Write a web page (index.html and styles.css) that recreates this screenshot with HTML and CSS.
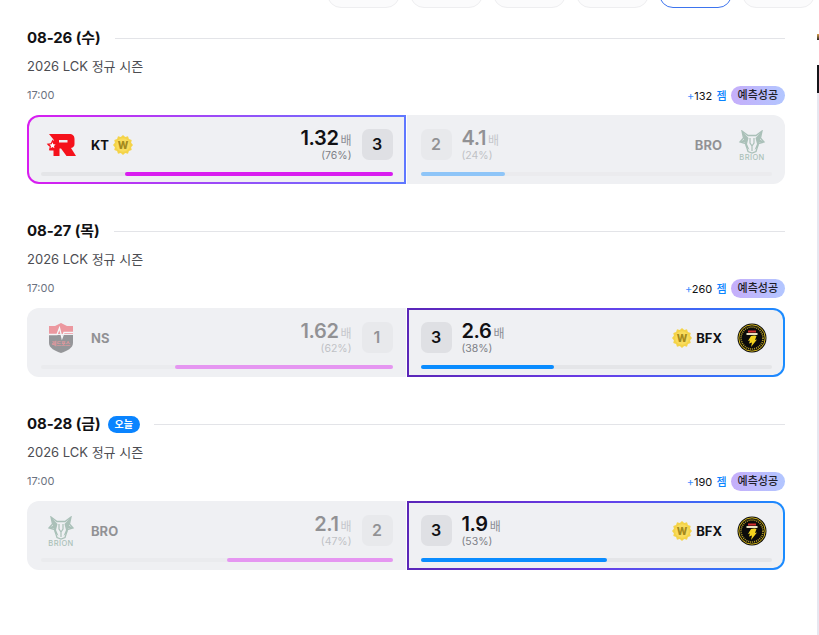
FILE: index.html
```html
<!DOCTYPE html>
<html lang="ko">
<head>
<meta charset="utf-8">
<title>LCK 승부예측</title>
<link rel="stylesheet" href="styles.css">
</head>
<body>
<svg class="defs" width="0" height="0" aria-hidden="true">
  <symbol id="logo-kt" viewBox="0 0 30 22">
    <path fill="#f5121c" d="M3 0H23C27 0 28.500 2 28.500 5V10C28.500 12 27.500 13.500 25 14L30 22H20.500L15 14.500H13.500V22H7.500V16.500H3.500L4.500 13 1 10.500H5.500L6.500 7H7.500V5.500Z"/>
    <rect x="13" y="6" width="8.500" height="2.500" fill="#eff0f3"/>
    <polygon fill="#f5121c" points="6.500,5.500 8.200,9.300 12.300,9.700 9.200,12.400 10.100,16.500 6.500,14.300 2.900,16.500 3.800,12.400 .7,9.700 4.800,9.300"/>
    <polygon fill="#fff" points="6.500,8.200 7.400,10.300 9.600,10.500 8,12 8.400,14.200 6.500,13 4.600,14.200 5,12 3.400,10.500 5.600,10.300"/>
  </symbol>
  <symbol id="logo-bro" viewBox="0 0 30 30">
    <path fill="none" stroke="#4c8069" stroke-width="1.300" d="M5 1 11 5.500H19L25 1 23.500 8 27 12 21.500 13.500 19 21.500 15 23 11 21.500 8.500 13.500 3 12 6.500 8Z"/>
    <path fill="#4c8069" d="M5 1 11.500 8 10 14 12.500 20 9 17 8 12.500 3 12 7 9.500ZM25 1 18.500 8 20 14 17.500 20 21 17 22 12.500 27 12 23 9.500Z"/>
    <path fill="none" stroke="#4c8069" stroke-width="1.200" d="M13 8V13L15 16V21M17 8V13L15 16"/>
    <text class="bro-word" x="15" y="29.500" text-anchor="middle">BRION</text>
  </symbol>
  <symbol id="logo-ns" viewBox="0 0 24 30">
    <path fill="#e8202c" d="M12 0 18 3H24V11H0V3H6Z"/>
    <path fill="#1c1c1e" d="M0 12H24V20C24 25 18 28 12 30 6 28 0 25 0 20Z"/>
    <path fill="none" stroke="#fff" stroke-width="1.300" d="M0 11.500H8L10.500 5 13 15 15 9.500H24"/>
    <text class="ns-word" x="12" y="21.500" text-anchor="middle">레드포스</text>
  </symbol>
  <symbol id="logo-bfx" viewBox="0 0 30 30">
    <circle cx="15" cy="15" r="14.500" fill="#0b0b0b"/>
    <circle cx="15" cy="15" r="13.200" fill="none" stroke="#e2c21c" stroke-width=".9"/>
    <circle cx="15" cy="15" r="11" fill="none" stroke="#b9a22a" stroke-width="1.600" stroke-dasharray="1 1"/>
    <circle cx="15" cy="15" r="9" fill="#0b0b0b"/>
    <rect x="11" y="7.500" width="8" height="2" fill="#d32f2f"/>
    <rect x="9.500" y="10" width="11" height="2" fill="#e8e2c0"/>
    <path fill="#f2d21e" d="M17.500 12.500 19.500 13 18 17 20 16.500 14 24 15 19.500 12 20.500 13 17.500 11 18 14 13Z"/>
  </symbol>
  <symbol id="badge-w" viewBox="0 0 20 20">
    <polygon fill="#f4d348" points="20,10 18.100,12.200 18.700,15 15.900,15.900 15,18.700 12.200,18.100 10,20 7.800,18.100 5,18.700 4.100,15.900 1.300,15 1.900,12.200 0,10 1.900,7.800 1.300,5 4.100,4.100 5,1.300 7.800,1.900 10,0 12.200,1.900 15,1.300 15.900,4.100 18.700,5 18.100,7.800"/>
    <circle cx="10" cy="10" r="6.800" fill="#f9dc5c"/>
    <text class="w-word" x="10" y="13.600" text-anchor="middle">W</text>
  </symbol>
</svg>

<div class="page">
  <main class="main">
    <nav class="pills">
      <span class="pill"></span><span class="pill"></span><span class="pill"></span><span class="pill"></span>
      <span class="pill pill-active"></span><span class="pill"></span>
    </nav>

    <section class="day">
      <header class="day-head"><h2 class="day-date">08-26 (수)</h2><span class="day-rule"></span></header>
      <p class="league">2026 LCK 정규 시즌</p>
      <div class="meta">
        <span class="time">17:00</span>
        <span class="reward"><i class="plus">+</i>132 <b class="gem">젬</b></span>
        <span class="result">예측성공</span>
      </div>
      <div class="match">
        <div class="side side-left win win-pink">
          <div class="row">
            <svg class="logo"><use href="#logo-kt" x="5" y="4" width="30" height="22"/></svg>
            <span class="team">KT</span>
            <svg class="badge"><use href="#badge-w"/></svg>
            <div class="odds odds-end"><div class="odds-main"><span class="rate">1.32</span><span class="unit">배</span></div><span class="pct">(76%)</span></div>
            <span class="score">3</span>
          </div>
          <div class="track track-end"><span class="fill fill-pink" style="width:76%"></span></div>
        </div>
        <div class="side side-right lose">
          <div class="row">
            <span class="score">2</span>
            <div class="odds"><div class="odds-main"><span class="rate">4.1</span><span class="unit">배</span></div><span class="pct">(24%)</span></div>
            <span class="team team-end">BRO</span>
            <svg class="logo"><use href="#logo-bro" x="5" y="0" width="30" height="30"/></svg>
          </div>
          <div class="track"><span class="fill fill-blue" style="width:24%"></span></div>
        </div>
      </div>
    </section>

    <section class="day">
      <header class="day-head"><h2 class="day-date">08-27 (목)</h2><span class="day-rule"></span></header>
      <p class="league">2026 LCK 정규 시즌</p>
      <div class="meta">
        <span class="time">17:00</span>
        <span class="reward"><i class="plus">+</i>260 <b class="gem">젬</b></span>
        <span class="result">예측성공</span>
      </div>
      <div class="match">
        <div class="side side-left lose">
          <div class="row">
            <svg class="logo"><use href="#logo-ns" x="8" y="0" width="24" height="30"/></svg>
            <span class="team">NS</span>
            <div class="odds odds-end"><div class="odds-main"><span class="rate">1.62</span><span class="unit">배</span></div><span class="pct">(62%)</span></div>
            <span class="score">1</span>
          </div>
          <div class="track track-end"><span class="fill fill-pink" style="width:62%"></span></div>
        </div>
        <div class="side side-right win win-blue">
          <div class="row">
            <span class="score">3</span>
            <div class="odds"><div class="odds-main"><span class="rate">2.6</span><span class="unit">배</span></div><span class="pct">(38%)</span></div>
            <svg class="badge badge-end"><use href="#badge-w"/></svg>
            <span class="team">BFX</span>
            <svg class="logo"><use href="#logo-bfx" x="5" y="0" width="30" height="30"/></svg>
          </div>
          <div class="track"><span class="fill fill-blue" style="width:38%"></span></div>
        </div>
      </div>
    </section>

    <section class="day">
      <header class="day-head"><h2 class="day-date">08-28 (금)</h2><span class="today">오늘</span><span class="day-rule"></span></header>
      <p class="league">2026 LCK 정규 시즌</p>
      <div class="meta">
        <span class="time">17:00</span>
        <span class="reward"><i class="plus">+</i>190 <b class="gem">젬</b></span>
        <span class="result">예측성공</span>
      </div>
      <div class="match">
        <div class="side side-left lose">
          <div class="row">
            <svg class="logo"><use href="#logo-bro" x="5" y="0" width="30" height="30"/></svg>
            <span class="team">BRO</span>
            <div class="odds odds-end"><div class="odds-main"><span class="rate">2.1</span><span class="unit">배</span></div><span class="pct">(47%)</span></div>
            <span class="score">2</span>
          </div>
          <div class="track track-end"><span class="fill fill-pink" style="width:47%"></span></div>
        </div>
        <div class="side side-right win win-blue">
          <div class="row">
            <span class="score">3</span>
            <div class="odds"><div class="odds-main"><span class="rate">1.9</span><span class="unit">배</span></div><span class="pct">(53%)</span></div>
            <svg class="badge badge-end"><use href="#badge-w"/></svg>
            <span class="team">BFX</span>
            <svg class="logo"><use href="#logo-bfx" x="5" y="0" width="30" height="30"/></svg>
          </div>
          <div class="track"><span class="fill fill-blue" style="width:53%"></span></div>
        </div>
      </div>
    </section>
  </main>
  <aside class="edge"><span class="edge-mark"></span><span class="edge-bar"></span></aside>
</div>
</body>
</html>
```

FILE: styles.css
```css
* { box-sizing: border-box; }
html, body { margin: 0; padding: 0; }
body {
  width: 819px;
  height: 635px;
  overflow: hidden;
  background: #fff;
  color: #111114;
  font-family: Inter, "Noto Sans CJK KR", "Noto Sans", sans-serif;
}
.defs { position: absolute; }

.page { display: flex; width: 819px; height: 635px; }
.main { width: 817px; padding: 0 32px 0 27px; }

.pills {
  display: flex;
  justify-content: flex-end;
  gap: 10px;
  height: 30px;
  margin: -22px -30px 19px 0;
}
.pill {
  width: 73px;
  height: 30px;
  border: 1px solid #eeeef0;
  border-radius: 14px;
  background: #fbfbfc;
}
.pill-active { border-color: #3d74ee; background: #fff; }

.day { margin-bottom: 36px; }
.day-head { display: flex; align-items: center; height: 22px; }
.day-date { margin: 0; font-size: 15px; font-weight: 700; line-height: 22px; letter-spacing: -.1px; }
.day-rule { flex: 1; height: 1px; margin-left: 14px; background: #e3e4e8; }
.today {
  height: 17px;
  margin-left: 7px;
  padding: 0 7px;
  border-radius: 9px;
  background: #0a84ff;
  color: #fff;
  font-size: 10px;
  font-weight: 700;
  line-height: 17px;
}

.league { margin: 8px 0 0; color: #4c4d52; font-size: 13px; line-height: 18px; }

.meta { display: flex; align-items: center; height: 24px; margin: 8px 0; }
.time { margin-right: auto; color: #6b7280; font-size: 11px; }
.reward { color: #111114; font-size: 11px; }
.plus { color: #3d8bff; font-style: normal; }
.gem { color: #0a84ff; font-weight: 500; margin-left: 1px; }
.result {
  height: 19px;
  margin-left: 4px;
  padding: 0 7px;
  border-radius: 10px;
  background: linear-gradient(90deg, #c6aefa, #b2c6ff);
  color: #1e1e28;
  font-size: 11px;
  font-weight: 500;
  line-height: 19px;
}

.match { display: flex; gap: 1px; height: 69px; }
.side {
  flex: 1;
  display: flex;
  flex-direction: column;
  justify-content: space-between;
  padding: 12px 11px 6px 12px;
  border: 2px solid transparent;
  background: #eff0f3;
}
.side-left { border-radius: 12px 0 0 12px; padding-right: 11px; }
.side-right { border-radius: 0 12px 12px 0; }
.win-pink {
  background: linear-gradient(#eff0f3, #eff0f3) padding-box,
    linear-gradient(90deg, #d91cf0, #5f78ff) border-box;
}
.win-blue {
  background: linear-gradient(#eff0f3, #eff0f3) padding-box,
    linear-gradient(90deg, #5a26b8, #6a3ce8 50%, #1a8cff) border-box;
}

.row { display: flex; align-items: center; height: 31px; }
.lose .row, .lose .track { opacity: .42; }

.logo { width: 40px; height: 30px; flex: none; }
.team { margin-left: 10px; font-size: 13px; font-weight: 700; line-height: 16px; }
.team-end { margin: 0 10px 0 auto; }
.side-right .team { margin-right: 10px; }
.badge { width: 20px; height: 20px; flex: none; margin-left: 4px; }
.badge-end { margin-left: auto; }
.badge-end + .team { margin-left: 4px; }

.odds { display: flex; flex-direction: column; margin-left: 10px; }
.odds-end { align-items: flex-end; margin-left: auto; margin-right: 10px; }
.odds-main { display: flex; align-items: baseline; gap: 2px; height: 21px; line-height: 21px; }
.rate { font-size: 20px; font-weight: 600; letter-spacing: -.4px; }
.unit { color: #8b8d94; font-size: 12px; }
.pct { color: #7d7f86; font-size: 10.500px; line-height: 13px; }

.score {
  flex: none;
  width: 31px;
  height: 31px;
  border-radius: 7px;
  background: #dfe0e4;
  font-size: 16px;
  font-weight: 600;
  line-height: 31px;
  text-align: center;
}

.track {
  display: flex;
  height: 4px;
  border-radius: 2px;
  background: #e4e5e8;
}
.track-end { justify-content: flex-end; }
.fill { height: 4px; border-radius: 2px; }
.fill-pink { background: #d91cf0; }
.fill-blue { background: #0a8cff; }

.bro-word { fill: #4c8069; font-family: Inter, sans-serif; font-size: 7.500px; font-weight: 500; letter-spacing: .4px; }
.ns-word { fill: #e8202c; font-family: "Noto Sans CJK KR", sans-serif; font-size: 5px; font-weight: 700; }
.w-word { fill: #a48a1c; font-family: Inter, sans-serif; font-size: 10px; font-weight: 800; }

.edge { display: flex; flex-direction: column; width: 2px; padding-top: 34px; }
.edge-mark { height: 6px; background: linear-gradient(#d9a14a, #222); }
.edge-bar { flex: 1; margin-top: 25px; background: linear-gradient(#15151a 0, #15151a 28px, #e7e7f0 28px); }
```
